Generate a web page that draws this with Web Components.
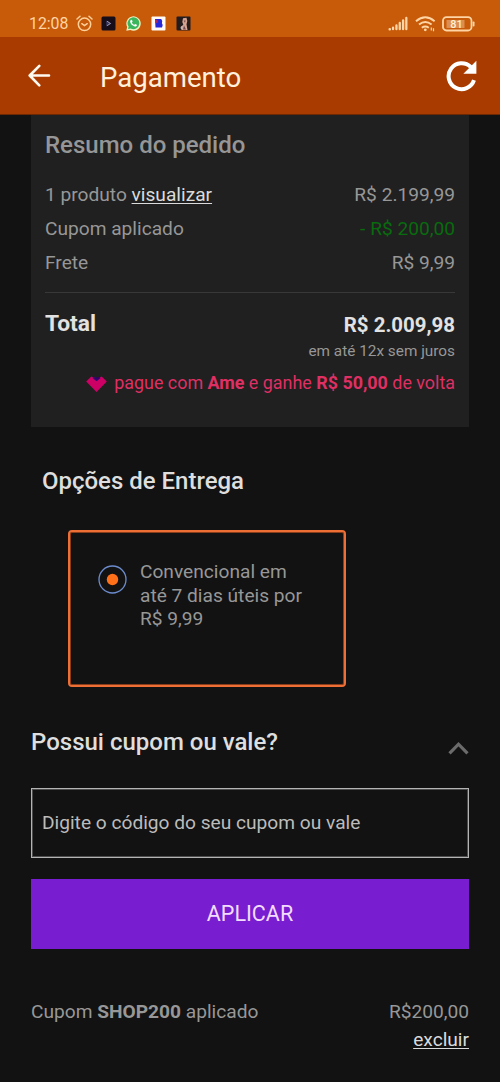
<!DOCTYPE html>
<html lang="pt-BR">
<head>
<meta charset="utf-8">
<title>Pagamento</title>
<style>
html,body{margin:0;background:#121212}
body{font-family:Roboto,"Noto Sans",sans-serif;font-size:19.15px;line-height:24px;color:#979797;width:500px;height:1082px;overflow:hidden}
</style>
</head>
<body>
<payment-page></payment-page>
<script>
function define(name, html) {
  const template = document.createElement('template');
  template.innerHTML = html;
  customElements.define(name, class extends HTMLElement {
    constructor() {
      super();
      this.attachShadow({mode: 'open'}).append(template.content.cloneNode(true));
    }
  });
}

define('status-bar', `
<style>
:host{display:flex;box-sizing:border-box;height:37px;padding:10px 25px 0 29px;background:#c75b0a;color:#ffd5a5;justify-content:space-between;align-items:center}
.g{display:flex;align-items:center}
.time{font-size:15.8px;line-height:20px;width:47px}
svg{display:block}
.l svg{margin-right:10px}
.l svg:first-of-type{margin-right:8px}
</style>
<div class="g l">
<span class="time">12:08</span>
<svg width="17" height="17" viewBox="0 0 17 17" fill="none" stroke="#ffd09a" stroke-width="1.5" stroke-linecap="round"><circle cx="8.5" cy="9.3" r="6.2"/><path d="M1 4 4 1.3M16 4 13 1.3M5.8 8.7l2.7 1.9 2.7-1.9"/></svg>
<svg width="15" height="15" viewBox="0 0 15 15"><rect x=".5" y=".5" width="14" height="14" rx="1.5" fill="#160d18"/><path d="M5.2 4.5 10.5 7.5 5.2 10.5z" fill="#35355c"/><path d="M6 5.2 9.5 7.5 6 9.7" fill="none" stroke="#a8a2b8" stroke-width=".9"/></svg>
<svg width="15" height="15" viewBox="0 0 15 15"><path d="M.3 14.8 1.2 11A7.2 7.2 0 1 1 4.3 14z" fill="#eef3c4"/><path d="M2 13.1 2.6 10.6A5.9 5.9 0 1 1 4.6 12.4z" fill="#3cb65c"/><path d="M4.6 4.2c.5-.7 1.2-.6 1.5.1l.5 1.2-.7.9c.5 1.1 1.2 1.8 2.4 2.3l.9-.8 1.7.8c.3 1.3-1 2-2.2 1.7-2.6-.7-4.5-2.8-4.6-4.8 0-.5.2-1 .5-1.4z" fill="#fff"/></svg>
<svg width="15" height="15" viewBox="0 0 15 15"><rect x=".5" y=".5" width="14" height="14" rx="1" fill="#fffaf4"/><path d="M4 3h6.2l1 2-.3 2.3.8 1.7-.7 2.5H4.5z" fill="#2527d8"/><path d="M4 3.2 6.8 4.5v2.2L4 7z" fill="#b1285c"/></svg>
<svg width="15" height="15" viewBox="0 0 15 15"><rect x=".5" y=".5" width="14" height="14" rx="1" fill="#241b1c"/><path d="M7 2.2 10.5 1.8 11.3 5 10.5 8.3 11.5 14H5.5L4.7 11 7.3 8.7 6.3 6z" fill="#d6a291"/><path d="M7.7 4.5h2l-.8 2.2zM8 9.5l2 4H7z" fill="#71484a"/><path d="M4.7 11 6.4 9.7 6.5 13H4.8z" fill="#bdb6c2"/></svg>
</div>
<div class="g">
<svg width="20" height="15" viewBox="0 0 20 15" fill="none" stroke="#ffd5a5" stroke-width="2.4" stroke-linecap="round"><path d="M1.7 13.2H2M5.3 13v-1.3M8.9 13V9.4M12.4 13V7M15.9 13V4.5M19.3 13V2" transform="scale(.95 1)"/></svg>
<svg style="margin:0 6px 0 7px" width="21" height="16" viewBox="0 0 21 16" fill="none" stroke="#ffd5a5" stroke-width="1.9"><path d="M1 5.2q9.3-7.8 18.6 0M4 8.6q6.3-5 12.6 0M6.8 11.7q3.5-2.5 7 0"/><circle cx="10.3" cy="13.8" r="1.4" fill="#ffd5a5" stroke="none"/><path d="M16.3 11.5v3M18.5 12.3v3" stroke-width="1.2"/></svg>
<svg width="33" height="16" viewBox="0 0 33 16"><rect x="1" y="1.2" width="28.5" height="13.3" rx="3.5" fill="none" stroke="#ffd5a5" stroke-width="1.8"/><rect x="4.5" y="4" width="18" height="8" fill="#dc8f50"/><rect x="30.7" y="5.5" width="1.8" height="5" rx=".8" fill="#ffd5a5"/><text x="14.5" y="11.8" text-anchor="middle" font-family="Roboto" font-size="10.8" font-weight="500" fill="#fff0d8">81</text></svg>
</div>`);

define('app-header', `
<style>
:host{display:flex;box-sizing:border-box;height:78px;background:#a93b00;align-items:center;padding:0 23px 0 28px;color:#fff1dc;border-bottom:1px solid #6c2904}
.t{font-size:27.6px;line-height:34px;margin-left:49px;flex:1;padding-top:4px}
svg{display:block}
</style>
<svg width="23" height="23" viewBox="0 0 23 23" fill="none" stroke="#fffaf0" stroke-width="2.6" stroke-linecap="round" stroke-linejoin="round"><path d="M21 11.5H2M11.3 1.8 1.7 11.5l9.6 9.8"/></svg>
<span class="t"><slot></slot></span>
<svg width="32" height="32" viewBox="0 0 32 32"><path d="M29 20.2A13 13 0 1 1 25.8 7" fill="none" stroke="#fff" stroke-width="4"/><path d="M31.4.8V13.8H18.4z" fill="#fff"/></svg>`);

define('summary-line', `
<style>:host{display:flex;justify-content:space-between;height:34px;line-height:34px}</style>
<slot></slot><slot name="value"></slot>`);

define('order-summary', `
<style>
:host{display:block;box-sizing:border-box;margin:0 31px;width:438px;height:312px;background:#202020;padding:13px 14px 0}
h2{margin:0 0 16px;font-size:24px;line-height:34px;font-weight:500;color:#969696}
a{color:#dadada;text-decoration:underline;text-decoration-thickness:1px;text-underline-offset:2px}
.off{color:#086b0e}
hr{border:0;height:1px;background:#383838;margin:12px 0 16px}
.total{display:flex;justify-content:space-between;color:#e2e2e2;font-weight:700;line-height:29px;height:31px;font-size:22.8px}
.total .v{font-size:20.45px;line-height:32px}
.inst{text-align:right;font-size:15.35px;line-height:22px}
.ame{display:flex;justify-content:flex-end;align-items:center;margin-top:9px;line-height:24px;font-size:17.9px;color:#df2f63}
.ame svg{margin:2px 7px 0 0}
b{font-weight:700}
</style>
<h2>Resumo do pedido</h2>
<summary-line><span>1 produto <a>visualizar</a></span><span slot="value">R$ 2.199,99</span></summary-line>
<summary-line><span>Cupom aplicado</span><span slot="value" class="off">- R$ 200,00</span></summary-line>
<summary-line><span>Frete</span><span slot="value">R$ 9,99</span></summary-line>
<hr>
<div class="total"><span>Total</span><span class="v">R$ 2.009,98</span></div>
<div class="inst">em até 12x sem juros</div>
<div class="ame"><svg width="21" height="18" viewBox="0 0 21 18"><path d="M.2 6.5 5.3 1.5 10.5 3.4 15.7 1.5 20.8 6.5 10.5 17z" fill="#cd0066"/><path d="M7 1.2 10.5 2.8 14 1.2 14.3 3.2 10.5 6.2 6.7 3.2z" fill="#32006c"/></svg><span>pague com <b>Ame</b> e ganhe <b>R$ 50,00</b> de volta</span></div>`);

define('delivery-options', `
<style>
:host{display:block}
h2{margin:38px 0 32px 42px;font-size:23.97px;line-height:33px;font-weight:500;color:#dedede}
.o{box-sizing:border-box;margin-left:68px;width:278px;height:157px;border:2px solid #ee6f36;box-shadow:inset 0 0 0 1px #8a3d1a;border-radius:4px;display:flex;padding:28px 28px 0}
svg{margin:5px 13px 0 0;flex:none}
.d{line-height:23.5px;width:175px}
</style>
<h2>Opções de Entrega</h2>
<div class="o"><svg width="29" height="29" viewBox="0 0 29 29"><circle cx="14.5" cy="14.5" r="13.5" fill="none" stroke="#6c8cce" stroke-width="1.3"/><circle cx="14.5" cy="14.5" r="5.7" fill="#ff7019"/></svg><div class="d"><slot></slot></div></div>`);

define('coupon-form', `
<style>
:host{display:block;margin:38px 31px 0}
.h{display:flex;justify-content:space-between;height:32px;margin-bottom:31px}
h2{margin:0;font-size:24px;line-height:34px;font-weight:500;color:#dedede}
.h svg{margin-top:16px}
.i{box-sizing:border-box;height:70px;border:1px solid #b4b4b4;box-shadow:inset 0 0 0 1px #4c4c4c;padding:0 10px;line-height:68px;color:#bcbcbc}
.b{margin-top:21px;height:70px;line-height:70px;background:#781ed0;color:#f3dcff;text-align:center;font-size:21.5px}
.a{display:flex;justify-content:space-between;margin-top:49px;line-height:28px}
.r{text-align:right}
a{color:#dadada;text-decoration:underline;text-decoration-thickness:1px;text-underline-offset:2px}
</style>
<div class="h"><h2>Possui cupom ou vale?</h2><svg width="21" height="14" viewBox="0 0 21 14" fill="none" stroke="#6b6b6b" stroke-width="3.2"><path d="M1.5 12.3 10.5 3.2 19.5 12.3"/></svg></div>
<div class="i">Digite o código do seu cupom ou vale</div>
<div class="b">APLICAR</div>
<div class="a"><span>Cupom <b>SHOP200</b> aplicado</span><div class="r">R$200,00<br><a>excluir</a></div></div>`);

define('payment-page', `
<style>:host{display:block;width:500px}</style>
<status-bar></status-bar>
<app-header>Pagamento</app-header>
<order-summary></order-summary>
<delivery-options>Convencional em<br>até 7 dias úteis por<br>R$ 9,99</delivery-options>
<coupon-form></coupon-form>`);
</script>
</body>
</html>
